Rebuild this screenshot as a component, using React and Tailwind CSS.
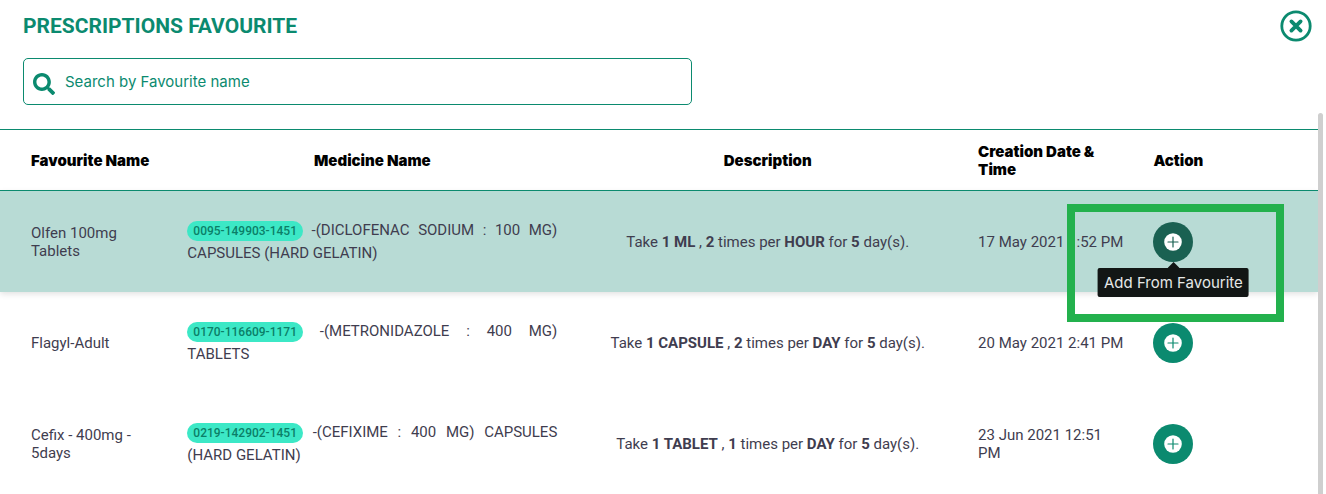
import React from "react";
import { FaSearch } from "react-icons/fa";

const rows = [
  {
    name: "Olfen 100mg Tablets",
    code: "0095-149903-1451",
    medicine: "-(DICLOFENAC SODIUM : 100 MG) CAPSULES (HARD GELATIN)",
    dose: "1 ML",
    times: "2",
    unit: "HOUR",
    days: "5",
    date: "17 May 2021 1:52 PM",
    active: true,
  },
  {
    name: "Flagyl-Adult",
    code: "0170-116609-1171",
    medicine: "-(METRONIDAZOLE : 400 MG) TABLETS",
    dose: "1 CAPSULE",
    times: "2",
    unit: "DAY",
    days: "5",
    date: "20 May 2021 2:41 PM",
  },
  {
    name: "Cefix - 400mg - 5days",
    code: "0219-142902-1451",
    medicine: "-(CEFIXIME : 400 MG) CAPSULES (HARD GELATIN)",
    dose: "1 TABLET",
    times: "1",
    unit: "DAY",
    days: "5",
    date: "23 Jun 2021 12:51 PM",
  },
];

function CloseIcon() {
  return (
    <svg viewBox="0 0 32 32" className="size-8" fill="none" stroke="currentColor" aria-hidden="true">
      <circle cx="16" cy="16" r="14.2" strokeWidth="2.8" />
      <path d="M11.4 11.4l9.2 9.2M20.6 11.4l-9.2 9.2" strokeWidth="3.8" strokeLinecap="round" />
    </svg>
  );
}

function PlusIcon() {
  return (
    <svg viewBox="0 0 18 18" className="size-[18px]" aria-hidden="true">
      <circle cx="9" cy="9" r="8.8" fill="#fff" />
      <path d="M9 4v10M4 9h10" stroke="currentColor" strokeWidth="1.2" strokeLinecap="round" />
    </svg>
  );
}

function AddButton({ active }) {
  return (
    <div className="relative w-10">
      <button
        type="button"
        aria-label="Add From Favourite"
        className={
          active
            ? "flex size-10 items-center justify-center rounded-full bg-[#1a6152] text-[#1a6152]"
            : "flex size-10 items-center justify-center rounded-full bg-[#0b8a6f] text-[#0b8a6f]"
        }
      >
        <PlusIcon />
      </button>
      {active && (
        <>
          <div className="pointer-events-none absolute -top-[18px] -left-[86px] z-10 h-[118px] w-[217px] border-8 border-[#23b14d]" />
          <div
            role="tooltip"
            className="absolute top-10 left-1/2 z-20 flex -translate-x-1/2 flex-col items-center"
          >
            <svg viewBox="0 0 12 6" className="h-[6px] w-3" aria-hidden="true">
              <path d="M6 0l6 6H0z" fill="#121615" />
            </svg>
            <div className="rounded-xs bg-[#121615] px-[6px] py-1 font-['Inter',sans-serif] text-[15px] leading-[21px] whitespace-nowrap text-[#e6e8e7]">
              Add From Favourite
            </div>
          </div>
        </>
      )}
    </div>
  );
}

export default function App() {
  return (
    <div className="flex h-screen flex-col overflow-hidden bg-white font-['Roboto',sans-serif] text-[#3f3d4f]">
      <header className="flex items-start justify-between pt-[10px] pr-[14px] pl-[23px]">
        <h1 className="text-[21px] leading-8 font-bold text-[#0b8a6f]">PRESCRIPTIONS FAVOURITE</h1>
        <button type="button" aria-label="Close" className="text-[#0b8a6f]">
          <CloseIcon />
        </button>
      </header>

      <div className="px-[23px] pt-4 pb-2">
        <label className="flex h-[47px] w-[669px] max-w-full items-center rounded-[5px] border border-[#0b8a6f] pl-[9px] text-[#0b8a6f]">
          <FaSearch className="mt-1 size-[22px] shrink-0" aria-hidden="true" />
          <input
            type="text"
            aria-label="Search by Favourite name"
            placeholder="Search by Favourite name"
            className="h-full flex-1 bg-transparent pl-[10px] font-['Inter',sans-serif] text-[15px] outline-none placeholder:text-[#0b8a6f]"
          />
        </label>
      </div>

      <div className="flex min-h-0 flex-1 pr-[3px]">
        <div className="min-w-0 flex-1 overflow-hidden pt-4">
          <table className="w-full table-fixed text-left text-[15px] leading-[18px]">
            <colgroup>
              <col className="w-[13%]" />
              <col className="w-[30.5%]" />
              <col className="w-[29.5%]" />
              <col className="w-[13.3%]" />
              <col className="w-[13.7%]" />
            </colgroup>
            <thead>
              <tr className="h-[61px] border-y border-[#0b8a6f] font-['Inter',sans-serif] text-[15px] leading-[18px] text-black">
                <th className="pt-[2px] pr-4 pl-[31px] font-black">Favourite Name</th>
                <th className="px-4 pt-[2px] text-center font-black">Medicine Name</th>
                <th className="px-4 pt-[2px] text-center font-black">Description</th>
                <th className="px-4 pt-[2px] font-black">Creation Date &amp; Time</th>
                <th className="px-4 pt-[2px] font-black">Action</th>
              </tr>
            </thead>
            <tbody>
              {rows.map((row) => (
                <tr
                  key={row.code}
                  className={
                    row.active
                      ? "h-[101px] bg-[#b8dbd5] shadow-[0_2px_6px_rgba(0,0,0,0.12)]"
                      : "h-[101px]"
                  }
                >
                  <td className="pt-[2px] pr-4 pl-[31px]">{row.name}</td>
                  <td className="px-4 pt-[2px] text-justify leading-[23px]">
                    <span className="inline-block rounded-full bg-[#3ce8c6] px-[6px] text-xs leading-5 font-medium text-[#0b7f68]">
                      {row.code}
                    </span>{" "}
                    {row.medicine}
                  </td>
                  <td className="px-4 pt-[2px] text-center">
                    Take <b>{row.dose}</b> , <b>{row.times}</b> times per <b>{row.unit}</b> for{" "}
                    <b>{row.days}</b> day(s).
                  </td>
                  <td className="pt-[2px] pr-3 pl-4">{row.date}</td>
                  <td className="px-4 pt-[2px]">
                    <AddButton active={row.active} />
                  </td>
                </tr>
              ))}
            </tbody>
          </table>
        </div>
        <div className="w-[5px] shrink-0 rounded-t-sm bg-[#cfcfcf]" />
      </div>
    </div>
  );
}
